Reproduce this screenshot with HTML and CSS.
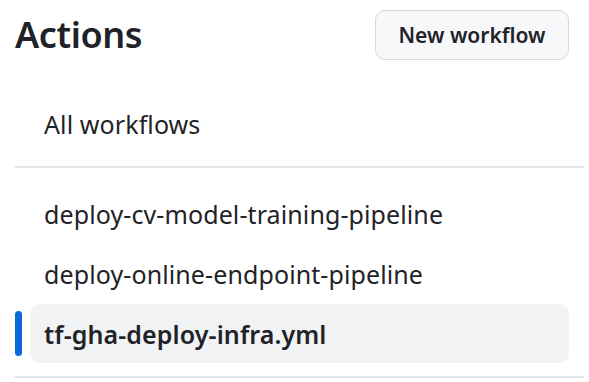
FILE: index.html
```html
<!DOCTYPE html>
<html lang="en">
<head>
<meta charset="utf-8">
<title>Actions</title>
<link rel="stylesheet" href="styles.css">
</head>
<body>
<div class="page">
  <div class="header">
    <h2 class="title">Actions</h2>
    <button class="btn" type="button">New workflow</button>
  </div>
  <ul class="nav nav-top">
    <li class="item"><span class="label">All workflows</span></li>
  </ul>
  <hr class="divider">
  <ul class="nav nav-list">
    <li class="item"><span class="label">deploy-cv-model-training-pipeline</span></li>
    <li class="item"><span class="label">deploy-online-endpoint-pipeline</span></li>
    <li class="item selected"><span class="bar"></span><span class="label">tf-gha-deploy-infra.yml</span></li>
  </ul>
  <hr class="divider divider-bottom">
</div>
</body>
</html>
```

FILE: styles.css
```css
* { box-sizing: border-box; }
html, body { margin: 0; padding: 0; background: #ffffff; }
body {
  font-family: "Noto Sans", "Open Sans", "Liberation Sans", sans-serif;
  color: #1f2328;
  width: 589px;
  height: 382px;
  overflow: hidden;
}
.page { padding: 0 5px 0 15px; }
.header {
  display: flex;
  justify-content: space-between;
  align-items: center;
  padding: 10px 15px 0 0;
  height: 60px;
}
.title {
  margin: 0;
  font-size: 36px;
  font-weight: 600;
  line-height: 50px;
  letter-spacing: -0.4px;
}
.btn {
  font-family: inherit;
  height: 50px;
  width: 194px;
  border: 1.5px solid #d1d9e0;
  border-radius: 10px;
  background: #f6f8fa;
  color: #1f2328;
  font-size: 21px;
  font-weight: 600;
  padding: 0;
}
.nav { list-style: none; margin: 0; padding: 0 15px; }
.nav-top { margin-top: 34px; }
.nav-list { margin-top: 16px; display: flex; flex-direction: column; gap: 1px; }
.item {
  position: relative;
  height: 59px;
  display: flex;
  align-items: center;
  padding-left: 14px;
  border-radius: 10px;
  font-size: 25px;
  letter-spacing: 0.1px;
}
.item.selected { background: #f2f3f5; font-weight: 600; }
.bar {
  position: absolute;
  left: -15px;
  top: 7px;
  width: 7px;
  height: 45px;
  border-radius: 4px;
  background: #0969da;
}
.divider {
  margin: 13px 0 0 0;
  border: 0;
  height: 2px;
  background: #e3e7eb;
}
.divider-bottom { margin-top: 13px; }
```
